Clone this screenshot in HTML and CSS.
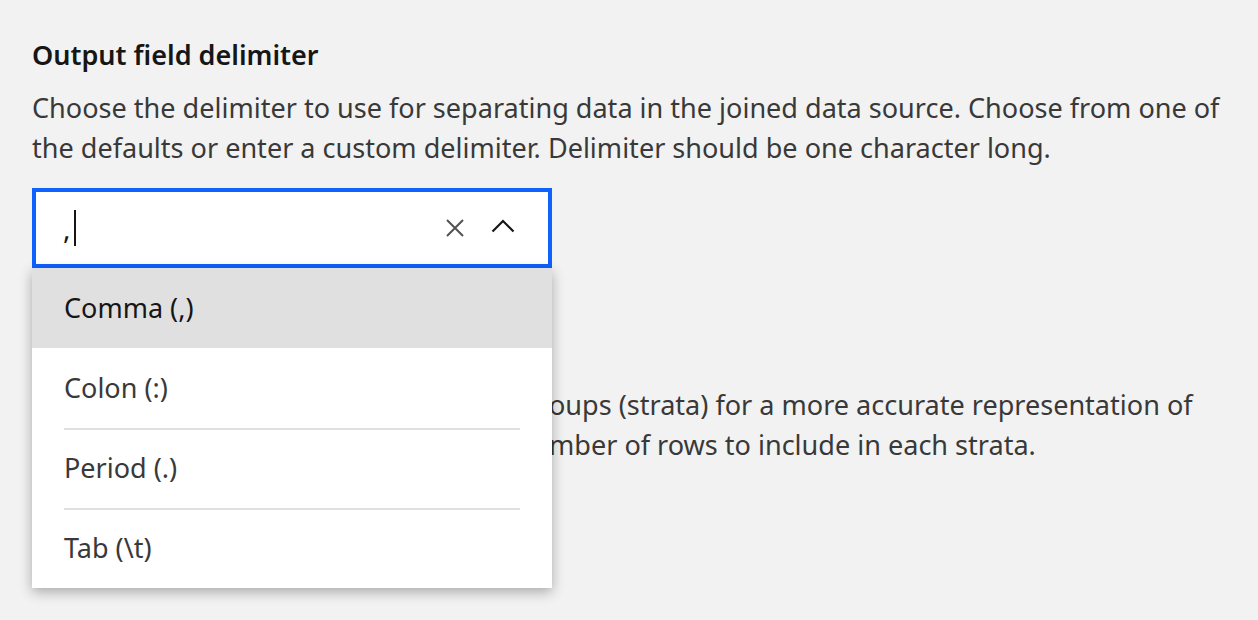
FILE: index.html
```html
<!DOCTYPE html>
<html lang="en">
<head>
<meta charset="utf-8">
<title>Output field delimiter</title>
<link rel="stylesheet" href="styles.css">
</head>
<body>
<main class="page">
  <section class="field">
    <h2 class="field-title">Output field delimiter</h2>
    <p class="field-help">Choose the delimiter to use for separating data in the joined data source. Choose from one of<br>the defaults or enter a custom delimiter. Delimiter should be one character long.</p>
    <div class="combo">
      <div class="combo-input">
        <span class="combo-value">,</span><span class="caret"></span>
        <div class="combo-actions">
          <svg class="icon-clear" width="20" height="20" viewBox="0 0 20 20" aria-hidden="true"><path d="M2 2 L18 18 M18 2 L2 18" stroke="#525252" stroke-width="2" fill="none"/></svg>
          <svg class="icon-chevron" width="24" height="14" viewBox="0 0 24 14" aria-hidden="true"><path d="M1.5 12.5 L12 2 L22.5 12.5" stroke="#161616" stroke-width="2.2" fill="none"/></svg>
        </div>
      </div>
      <ul class="combo-menu">
        <li class="combo-item is-active"><div class="combo-item-inner">Comma (,)</div></li>
        <li class="combo-item is-after-active"><div class="combo-item-inner">Colon (:)</div></li>
        <li class="combo-item"><div class="combo-item-inner">Period (.)</div></li>
        <li class="combo-item"><div class="combo-item-inner">Tab (\t)</div></li>
      </ul>
    </div>
  </section>
  <section class="field field-second">
    <h2 class="field-title">Stratified sampling</h2>
    <p class="field-help"><span class="hidden-prefix">Divide the data into smaller gr</span>oups (strata) for a more accurate representation of<br><span class="hidden-prefix">the population. Specify the nu</span>mber of rows to include in each strata.</p>
  </section>
</main>
</body>
</html>
```

FILE: styles.css
```css
* { box-sizing: border-box; }

html, body {
  height: 100%;
}

body {
  margin: 0;
  background: #f2f2f2;
  font-family: "Noto Sans", "Open Sans", sans-serif;
  color: #393939;
}

.page {
  min-height: 620px;
  padding: 37px 32px 0;
}

.field-title {
  margin: 0;
  font-size: 27px;
  line-height: 36px;
  font-weight: 600;
  color: #161616;
}

.field-help {
  margin: 15px 0 0;
  font-size: 27.05px;
  line-height: 40px;
  font-weight: 400;
  color: #393939;
  letter-spacing: 0;
  white-space: nowrap;
}

.combo {
  position: relative;
  width: 520px;
  margin-top: 20px;
}

.combo-input {
  display: flex;
  align-items: center;
  height: 80px;
  background: #fff;
  border: 4px solid #0f62fe;
  padding: 0 33px 0 27px;
  font-size: 28px;
  color: #161616;
}

.combo-value {
  line-height: 1;
}

.caret {
  display: inline-block;
  width: 2px;
  height: 36px;
  background: #161616;
  margin-left: 3px;
}

.combo-actions {
  margin-left: auto;
  display: flex;
  align-items: center;
  gap: 26px;
}

.icon-clear { display: block; }
.icon-chevron { display: block; margin-top: -5px; }

.combo-menu {
  position: absolute;
  top: 100%;
  left: 0;
  right: 0;
  margin: 0;
  padding: 0;
  list-style: none;
  background: #fff;
  box-shadow: 0 4px 12px rgba(0, 0, 0, 0.3);
  z-index: 2;
}

.combo-item {
  height: 80px;
  padding: 0 31px;
  font-size: 27px;
  color: #393939;
}

.combo-item-inner {
  height: 100%;
  display: flex;
  align-items: center;
  padding-bottom: 3px;
  border-top: 2px solid #e0e0e0;
  margin: 0 1px;
}

.combo-item:first-child .combo-item-inner,
.combo-item.is-active .combo-item-inner,
.combo-item.is-after-active .combo-item-inner {
  border-top-color: transparent;
}

.combo-item.is-active {
  background: #e0e0e0;
  color: #161616;
}

.field-second {
  margin-top: 66px;
}

.hidden-prefix {
  display: inline-block;
  width: 517px;
  overflow: hidden;
  white-space: nowrap;
  vertical-align: top;
}
```
